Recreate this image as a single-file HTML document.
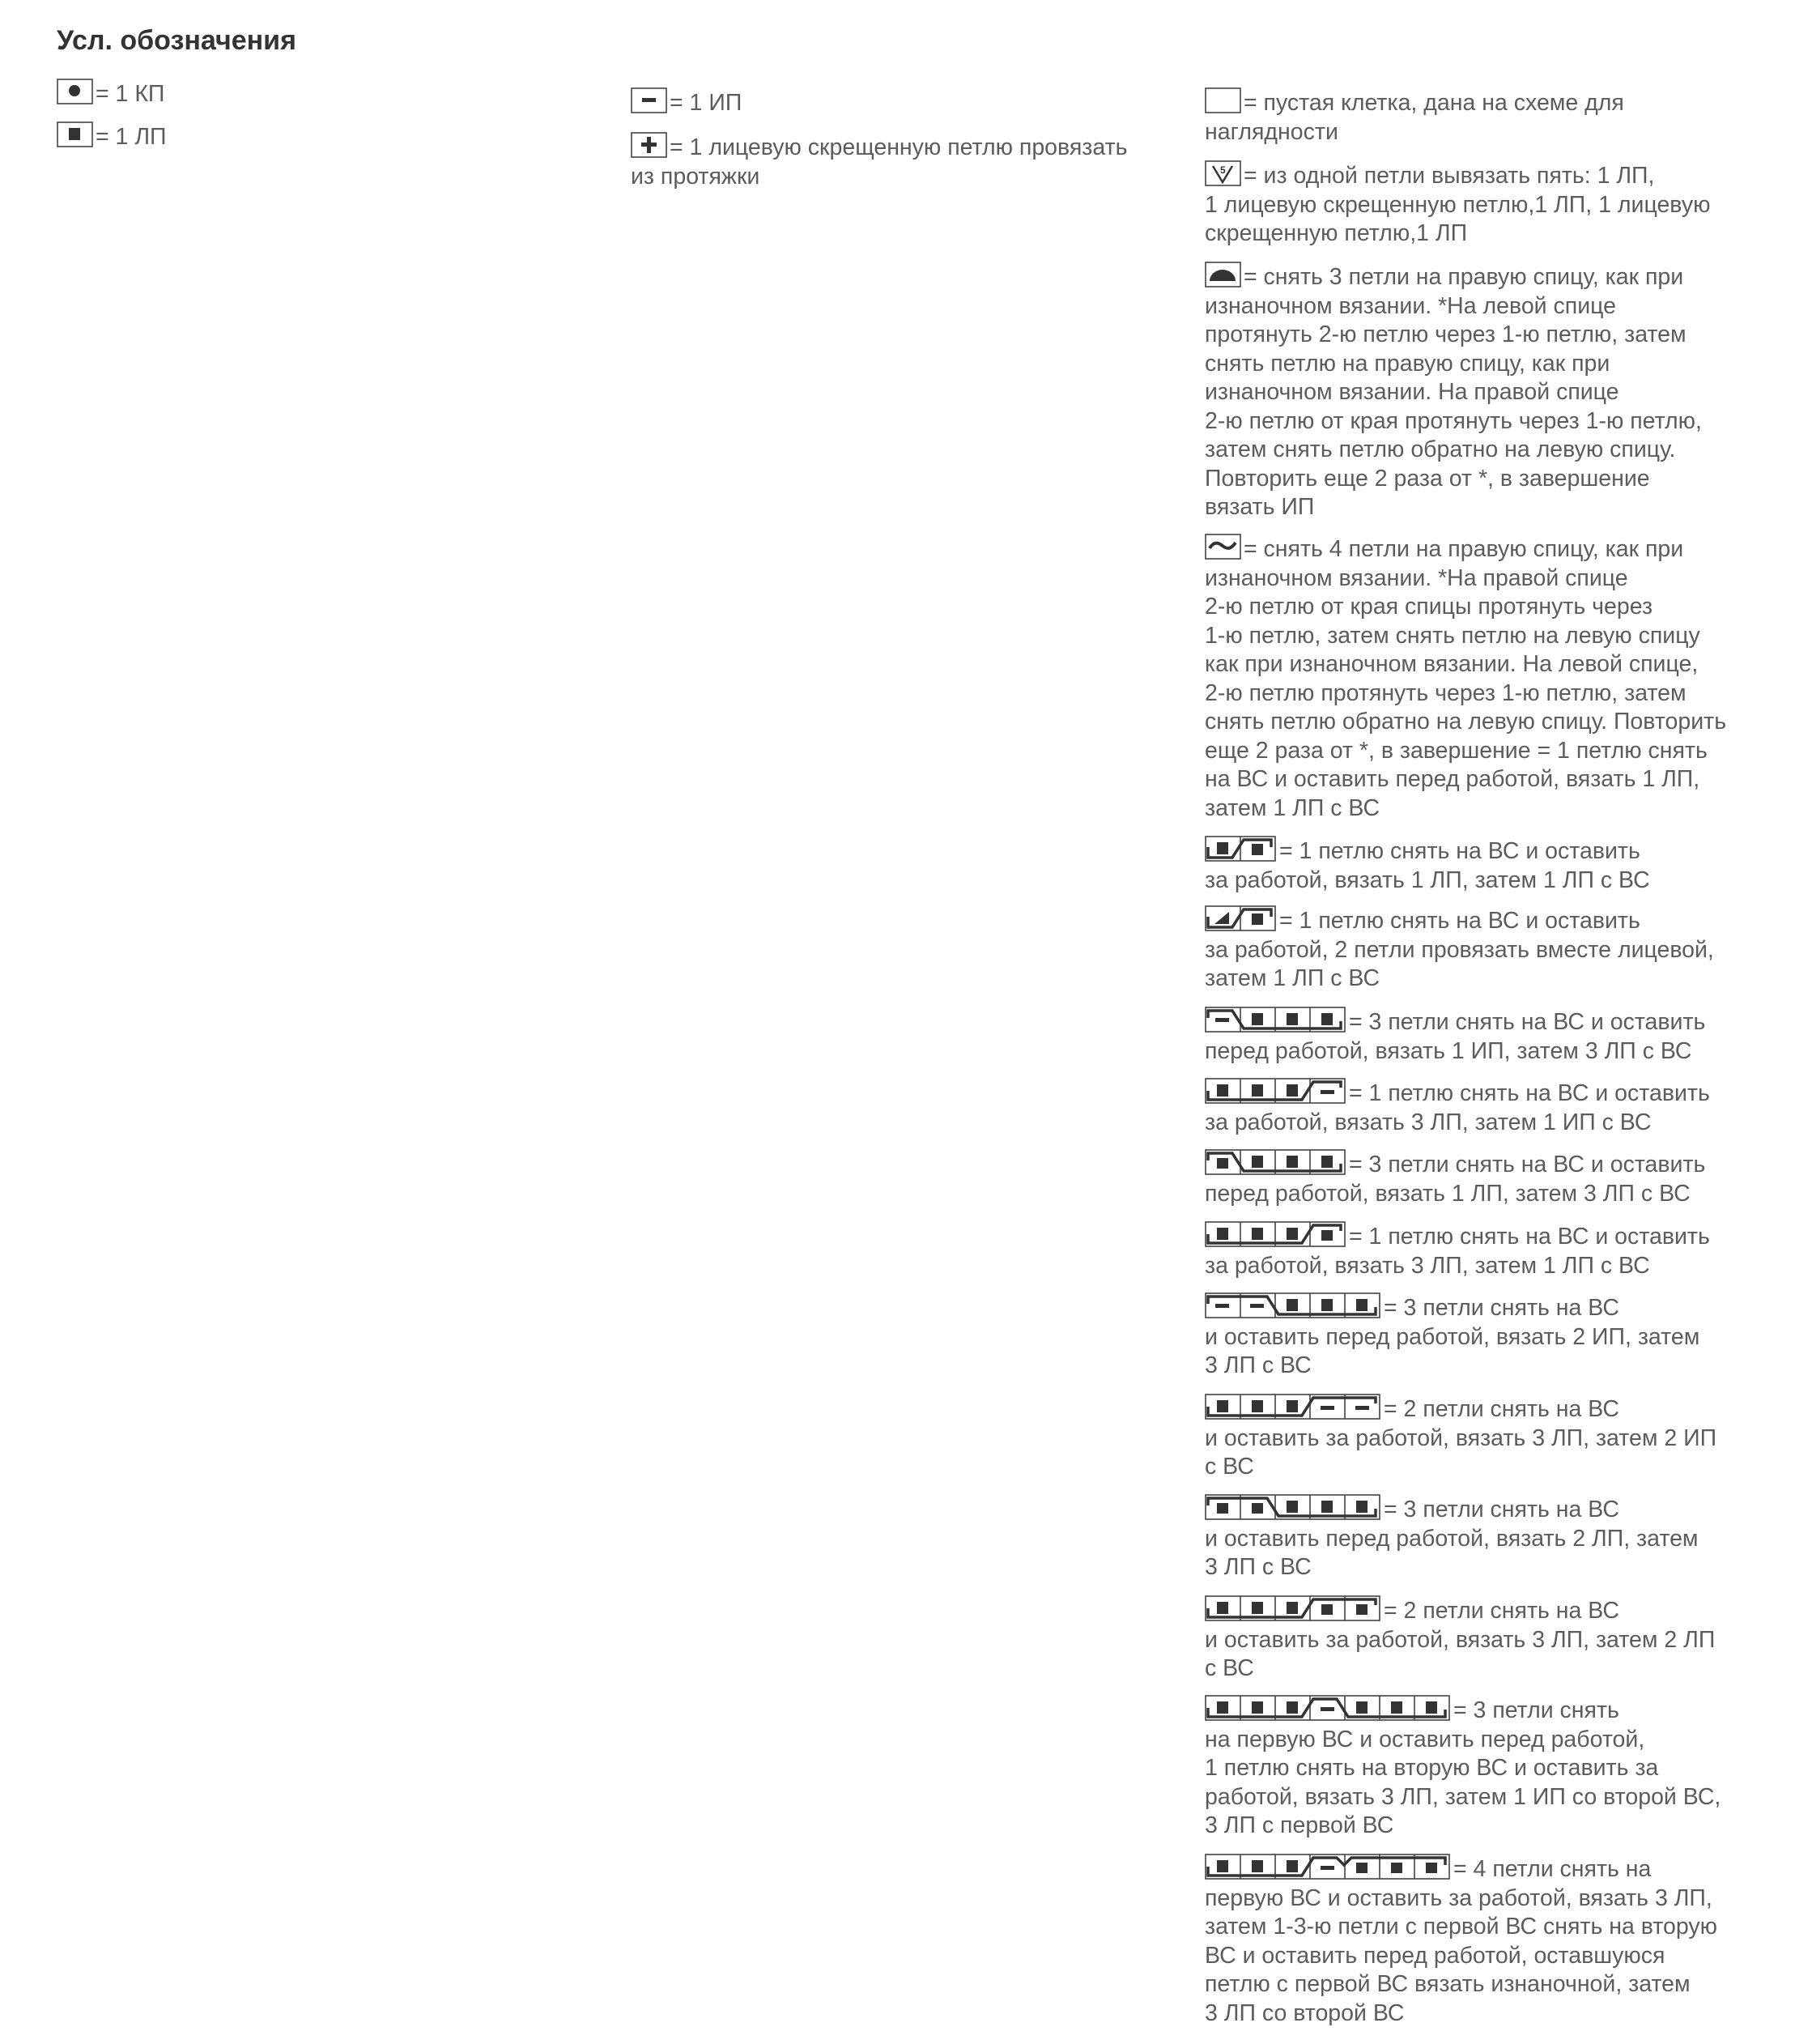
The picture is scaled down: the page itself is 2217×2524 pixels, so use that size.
<!DOCTYPE html>
<html><head><meta charset="utf-8"><style>
html,body{margin:0;padding:0;background:#fff;}
body{width:2217px;height:2524px;position:relative;overflow:hidden;font-family:"Liberation Sans","DejaVu Sans",sans-serif;color:#5c5c5c;}
.t{position:absolute;font-size:28.5px;line-height:35.5px;white-space:nowrap;}
.h{position:absolute;left:70px;top:31px;font-size:34px;font-weight:bold;color:#333;}
svg{vertical-align:middle;margin-right:3px;position:relative;top:-4px;}
svg .b{fill:none;stroke:#444;stroke-width:1.6}
svg .l{fill:none;stroke:#333;stroke-width:3.5}
svg .k{fill:#333}
</style></head><body>
<div class="h">Усл. обозначения</div>

<div class="t" style="left:70px;top:99px"><svg width="45" height="32"><rect class="b" x="1" y="1" width="43" height="30"/><circle class="k" cx="22" cy="15" r="7"/></svg>= 1 КП</div>
<div class="t" style="left:70px;top:152px"><svg width="45" height="32"><rect class="b" x="1" y="1" width="43" height="30"/><rect class="k" x="15" y="8" width="14" height="15"/></svg>= 1 ЛП</div>

<div class="t" style="left:779px;top:110px"><svg width="45" height="32"><rect class="b" x="1" y="1" width="43" height="30"/><rect class="k" x="14" y="13" width="17" height="5"/></svg>= 1 ИП</div>
<div class="t" style="left:779px;top:165px"><svg width="45" height="32"><rect class="b" x="1" y="1" width="43" height="30"/><rect class="k" x="20" y="6" width="5" height="20"/><rect class="k" x="13" y="13" width="19" height="5"/></svg>= 1 лицевую скрещенную петлю провязать<br>из протяжки</div>

<div class="t" style="left:1488px;top:110px"><svg width="45" height="32"><rect class="b" x="1" y="1" width="43" height="30"/></svg>= пустая клетка, дана на схеме для<br>наглядности</div>

<div class="t" style="left:1488px;top:200px"><svg width="45" height="32"><rect class="b" x="1" y="1" width="43" height="30"/><path d="M10 7 L22 27 L34 7" fill="none" stroke="#333" stroke-width="2.5"/><text x="19" y="16" font-size="12" font-weight="bold" fill="#333" font-family="Liberation Sans">5</text></svg>= из одной петли вывязать пять: 1 ЛП,<br>1 лицевую скрещенную петлю,1 ЛП, 1 лицевую<br>скрещенную петлю,1 ЛП</div>

<div class="t" style="left:1488px;top:325px"><svg width="45" height="32"><rect class="b" x="1" y="1" width="43" height="30"/><path class="k" d="M6 24 A16 14 0 0 1 38 24 Z"/></svg>= снять 3 петли на правую спицу, как при<br>изнаночном вязании. *На левой спице<br>протянуть 2-ю петлю через 1-ю петлю, затем<br>снять петлю на правую спицу, как при<br>изнаночном вязании. На правой спице<br>2-ю петлю от края протянуть через 1-ю петлю,<br>затем снять петлю обратно на левую спицу.<br>Повторить еще 2 раза от *, в завершение<br>вязать ИП</div>

<div class="t" style="left:1488px;top:661px"><svg width="45" height="32"><rect class="b" x="1" y="1" width="43" height="30"/><path d="M6 18 C12 8 18 12 22 15 C27 19 32 20 38 11" fill="none" stroke="#333" stroke-width="4"/></svg>= снять 4 петли на правую спицу, как при<br>изнаночном вязании. *На правой спице<br>2-ю петлю от края спицы протянуть через<br>1-ю петлю, затем снять петлю на левую спицу<br>как при изнаночном вязании. На левой спице,<br>2-ю петлю протянуть через 1-ю петлю, затем<br>снять петлю обратно на левую спицу. Повторить<br>еще 2 раза от *, в завершение = 1 петлю снять<br>на ВС и оставить перед работой, вязать 1 ЛП,<br>затем 1 ЛП с ВС</div>

<div class="t" style="left:1488px;top:1034px"><svg width="89" height="32"><rect class="b" x="1" y="1" width="86" height="30"/><line class="b" x1="44" y1="1" x2="44" y2="31"/><rect class="k" x="15" y="8" width="14" height="15"/><rect class="k" x="58" y="10" width="14" height="14"/><path class="l" d="M4 14 L4 27 L34 27 L48 5 L82 5 L82 14"/></svg>= 1 петлю снять на ВС и оставить<br>за работой, вязать 1 ЛП, затем 1 ЛП с ВС</div>

<div class="t" style="left:1488px;top:1120px"><svg width="89" height="32"><rect class="b" x="1" y="1" width="86" height="30"/><line class="b" x1="44" y1="1" x2="44" y2="31"/><path class="k" d="M12 23 L30 8 L30 23 Z"/><rect class="k" x="58" y="10" width="14" height="14"/><path class="l" d="M4 14 L4 27 L34 27 L48 5 L82 5 L82 14"/></svg>= 1 петлю снять на ВС и оставить<br>за работой, 2 петли провязать вместе лицевой,<br>затем 1 ЛП с ВС</div>

<div class="t" style="left:1488px;top:1245px"><svg width="175" height="32"><rect class="b" x="1" y="1" width="172" height="30"/><line class="b" x1="44" y1="1" x2="44" y2="31"/><line class="b" x1="87" y1="1" x2="87" y2="31"/><line class="b" x1="130" y1="1" x2="130" y2="31"/><rect class="k" x="13" y="14" width="17" height="5"/><rect class="k" x="58" y="8" width="14" height="15"/><rect class="k" x="101" y="8" width="14" height="15"/><rect class="k" x="144" y="8" width="14" height="15"/><path class="l" d="M4 14 L4 5 L34 5 L48 27 L168 27 L168 18"/></svg>= 3 петли снять на ВС и оставить<br>перед работой, вязать 1 ИП, затем 3 ЛП с ВС</div>

<div class="t" style="left:1488px;top:1333px"><svg width="175" height="32"><rect class="b" x="1" y="1" width="172" height="30"/><line class="b" x1="44" y1="1" x2="44" y2="31"/><line class="b" x1="87" y1="1" x2="87" y2="31"/><line class="b" x1="130" y1="1" x2="130" y2="31"/><rect class="k" x="15" y="8" width="14" height="15"/><rect class="k" x="58" y="8" width="14" height="15"/><rect class="k" x="101" y="8" width="14" height="15"/><rect class="k" x="143" y="15" width="17" height="5"/><path class="l" d="M4 16 L4 27 L120 27 L134 5 L168 5 L168 12"/></svg>= 1 петлю снять на ВС и оставить<br>за работой, вязать 3 ЛП, затем 1 ИП с ВС</div>

<div class="t" style="left:1488px;top:1421px"><svg width="175" height="32"><rect class="b" x="1" y="1" width="172" height="30"/><line class="b" x1="44" y1="1" x2="44" y2="31"/><line class="b" x1="87" y1="1" x2="87" y2="31"/><line class="b" x1="130" y1="1" x2="130" y2="31"/><rect class="k" x="15" y="11" width="14" height="13"/><rect class="k" x="58" y="8" width="14" height="15"/><rect class="k" x="101" y="8" width="14" height="15"/><rect class="k" x="144" y="8" width="14" height="15"/><path class="l" d="M4 14 L4 5 L34 5 L48 27 L168 27 L168 18"/></svg>= 3 петли снять на ВС и оставить<br>перед работой, вязать 1 ЛП, затем 3 ЛП с ВС</div>

<div class="t" style="left:1488px;top:1510px"><svg width="175" height="32"><rect class="b" x="1" y="1" width="172" height="30"/><line class="b" x1="44" y1="1" x2="44" y2="31"/><line class="b" x1="87" y1="1" x2="87" y2="31"/><line class="b" x1="130" y1="1" x2="130" y2="31"/><rect class="k" x="15" y="8" width="14" height="15"/><rect class="k" x="58" y="8" width="14" height="15"/><rect class="k" x="101" y="8" width="14" height="15"/><rect class="k" x="144" y="11" width="14" height="13"/><path class="l" d="M4 16 L4 27 L120 27 L134 5 L168 5 L168 12"/></svg>= 1 петлю снять на ВС и оставить<br>за работой, вязать 3 ЛП, затем 1 ЛП с ВС</div>

<div class="t" style="left:1488px;top:1598px"><svg width="218" height="32"><rect class="b" x="1" y="1" width="215" height="30"/><line class="b" x1="44" y1="1" x2="44" y2="31"/><line class="b" x1="87" y1="1" x2="87" y2="31"/><line class="b" x1="130" y1="1" x2="130" y2="31"/><line class="b" x1="173" y1="1" x2="173" y2="31"/><rect class="k" x="13" y="14" width="17" height="5"/><rect class="k" x="56" y="14" width="17" height="5"/><rect class="k" x="101" y="8" width="14" height="15"/><rect class="k" x="144" y="8" width="14" height="15"/><rect class="k" x="187" y="8" width="14" height="15"/><path class="l" d="M4 14 L4 5 L77 5 L91 27 L211 27 L211 18"/></svg>= 3 петли снять на ВС<br>и оставить перед работой, вязать 2 ИП, затем<br>3 ЛП с ВС</div>

<div class="t" style="left:1488px;top:1723px"><svg width="218" height="32"><rect class="b" x="1" y="1" width="215" height="30"/><line class="b" x1="44" y1="1" x2="44" y2="31"/><line class="b" x1="87" y1="1" x2="87" y2="31"/><line class="b" x1="130" y1="1" x2="130" y2="31"/><line class="b" x1="173" y1="1" x2="173" y2="31"/><rect class="k" x="15" y="8" width="14" height="15"/><rect class="k" x="58" y="8" width="14" height="15"/><rect class="k" x="101" y="8" width="14" height="15"/><rect class="k" x="143" y="15" width="17" height="5"/><rect class="k" x="186" y="15" width="17" height="5"/><path class="l" d="M4 16 L4 27 L120 27 L134 5 L211 5 L211 12"/></svg>= 2 петли снять на ВС<br>и оставить за работой, вязать 3 ЛП, затем 2 ИП<br>с ВС</div>

<div class="t" style="left:1488px;top:1847px"><svg width="218" height="32"><rect class="b" x="1" y="1" width="215" height="30"/><line class="b" x1="44" y1="1" x2="44" y2="31"/><line class="b" x1="87" y1="1" x2="87" y2="31"/><line class="b" x1="130" y1="1" x2="130" y2="31"/><line class="b" x1="173" y1="1" x2="173" y2="31"/><rect class="k" x="15" y="11" width="14" height="13"/><rect class="k" x="58" y="11" width="14" height="13"/><rect class="k" x="101" y="8" width="14" height="15"/><rect class="k" x="144" y="8" width="14" height="15"/><rect class="k" x="187" y="8" width="14" height="15"/><path class="l" d="M4 14 L4 5 L77 5 L91 27 L211 27 L211 18"/></svg>= 3 петли снять на ВС<br>и оставить перед работой, вязать 2 ЛП, затем<br>3 ЛП с ВС</div>

<div class="t" style="left:1488px;top:1972px"><svg width="218" height="32"><rect class="b" x="1" y="1" width="215" height="30"/><line class="b" x1="44" y1="1" x2="44" y2="31"/><line class="b" x1="87" y1="1" x2="87" y2="31"/><line class="b" x1="130" y1="1" x2="130" y2="31"/><line class="b" x1="173" y1="1" x2="173" y2="31"/><rect class="k" x="15" y="8" width="14" height="15"/><rect class="k" x="58" y="8" width="14" height="15"/><rect class="k" x="101" y="8" width="14" height="15"/><rect class="k" x="144" y="11" width="14" height="13"/><rect class="k" x="187" y="11" width="14" height="13"/><path class="l" d="M4 16 L4 27 L120 27 L134 5 L211 5 L211 12"/></svg>= 2 петли снять на ВС<br>и оставить за работой, вязать 3 ЛП, затем 2 ЛП<br>с ВС</div>

<div class="t" style="left:1488px;top:2095px"><svg width="304" height="32"><rect class="b" x="1" y="1" width="301" height="30"/><line class="b" x1="44" y1="1" x2="44" y2="31"/><line class="b" x1="87" y1="1" x2="87" y2="31"/><line class="b" x1="130" y1="1" x2="130" y2="31"/><line class="b" x1="173" y1="1" x2="173" y2="31"/><line class="b" x1="216" y1="1" x2="216" y2="31"/><line class="b" x1="259" y1="1" x2="259" y2="31"/><rect class="k" x="15" y="8" width="14" height="15"/><rect class="k" x="58" y="8" width="14" height="15"/><rect class="k" x="101" y="8" width="14" height="15"/><rect class="k" x="143" y="15" width="17" height="5"/><rect class="k" x="187" y="8" width="14" height="15"/><rect class="k" x="230" y="8" width="14" height="15"/><rect class="k" x="273" y="8" width="14" height="15"/><path class="l" d="M4 16 L4 27 L120 27 L134 5 L163 5 L177 27 L297 27 L297 18"/></svg>= 3 петли снять<br>на первую ВС и оставить перед работой,<br>1 петлю снять на вторую ВС и оставить за<br>работой, вязать 3 ЛП, затем 1 ИП со второй ВС,<br>3 ЛП с первой ВС</div>

<div class="t" style="left:1488px;top:2291px"><svg width="304" height="32"><rect class="b" x="1" y="1" width="301" height="30"/><line class="b" x1="44" y1="1" x2="44" y2="31"/><line class="b" x1="87" y1="1" x2="87" y2="31"/><line class="b" x1="130" y1="1" x2="130" y2="31"/><line class="b" x1="173" y1="1" x2="173" y2="31"/><line class="b" x1="216" y1="1" x2="216" y2="31"/><line class="b" x1="259" y1="1" x2="259" y2="31"/><rect class="k" x="15" y="8" width="14" height="15"/><rect class="k" x="58" y="8" width="14" height="15"/><rect class="k" x="101" y="8" width="14" height="15"/><rect class="k" x="143" y="15" width="17" height="5"/><rect class="k" x="187" y="11" width="14" height="13"/><rect class="k" x="230" y="11" width="14" height="13"/><rect class="k" x="273" y="11" width="14" height="13"/><path class="l" d="M4 16 L4 27 L120 27 L134 5 L163 5 L172 14 L181 5 L297 5 L297 14"/></svg>= 4 петли снять на<br>первую ВС и оставить за работой, вязать 3 ЛП,<br>затем 1-3-ю петли с первой ВС снять на вторую<br>ВС и оставить перед работой, оставшуюся<br>петлю с первой ВС вязать изнаночной, затем<br>3 ЛП со второй ВС</div>
</body></html>
